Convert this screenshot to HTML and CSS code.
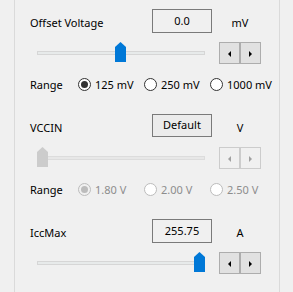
FILE: index.html
```html
<!DOCTYPE html>
<html lang="en">
<head>
  <meta charset="UTF-8" />
  <title>Voltage Settings</title>
  <link rel="stylesheet" href="styles.css">
</head>
<body>

<div class="panel">

  <!-- Offset Voltage -->
  <section class="setting">
    <div class="head">
      <span class="label">Offset Voltage</span>
      <span class="field">0.0</span>
      <span class="unit">mV</span>
    </div>
    <div class="slide-row">
      <div class="slider">
        <div class="track"></div>
        <div class="thumb" style="left: 78px"></div>
      </div>
      <div class="spin">
        <button class="arrow left"></button>
        <button class="arrow right"></button>
      </div>
    </div>
    <div class="range">
      <span class="range-label">Range</span>
      <label class="option"><span class="radio checked"></span>125 mV</label>
      <label class="option"><span class="radio"></span>250 mV</label>
      <label class="option"><span class="radio"></span>1000 mV</label>
    </div>
  </section>

  <!-- VCCIN -->
  <section class="setting disabled">
    <div class="head">
      <span class="label">VCCIN</span>
      <button class="field button">Default</button>
      <span class="unit">V</span>
    </div>
    <div class="slide-row">
      <div class="slider">
        <div class="track"></div>
        <div class="thumb" style="left: 0px"></div>
      </div>
      <div class="spin">
        <button class="arrow left"></button>
        <button class="arrow right"></button>
      </div>
    </div>
    <div class="range">
      <span class="range-label">Range</span>
      <label class="option"><span class="radio checked"></span>1.80 V</label>
      <label class="option"><span class="radio"></span>2.00 V</label>
      <label class="option"><span class="radio"></span>2.50 V</label>
    </div>
  </section>

  <!-- IccMax -->
  <section class="setting last">
    <div class="head">
      <span class="label">IccMax</span>
      <span class="field">255.75</span>
      <span class="unit">A</span>
    </div>
    <div class="slide-row">
      <div class="slider">
        <div class="track"></div>
        <div class="thumb" style="left: 157px"></div>
      </div>
      <div class="spin">
        <button class="arrow left"></button>
        <button class="arrow right"></button>
      </div>
    </div>
  </section>

</div>

</body>
</html>
```

FILE: styles.css
```css
/* Reset */
* {
  box-sizing: border-box;
  margin: 0;
  padding: 0;
}

body {
  font-family: "Noto Sans", "Liberation Sans", sans-serif;
  font-size: 11px;
  color: #000;
  background-color: #f0f0f0;
}

/* Group panel */
.panel {
  margin-left: 14px;
  width: 266px;
  height: 292px;
  padding-top: 9px;
  border-left: 1px solid #dadada;
  border-right: 1px solid #dadada;
}

.setting {
  height: 105px;
  padding-left: 15px;
}

.setting.last {
  height: auto;
}

/* Label / value / unit */
.head {
  display: flex;
  align-items: center;
  height: 24px;
}

.label {
  width: 122px;
  padding-top: 2px;
}

.field {
  width: 60px;
  height: 24px;
  border: 1px solid #7a7a7a;
  background: #f0f0f0;
  display: flex;
  justify-content: center;
  align-items: center;
  padding-bottom: 2px;
  font: inherit;
  color: #000;
}

.button {
  height: 23px;
  align-self: flex-start;
  background: #ececec;
}

.unit {
  width: 42px;
  margin-left: 7px;
  text-align: center;
  padding-top: 2px;
}

/* Slider + spin buttons */
.slide-row {
  display: flex;
  margin-top: 9px;
  height: 22px;
}

.slider {
  position: relative;
  width: 168px;
  margin-left: 7px;
}

.track {
  margin-top: 9px;
  height: 4px;
  background: #e7eaea;
  border: 1px solid #d6d6d6;
}

.thumb {
  position: absolute;
  top: 0;
  width: 11px;
  height: 20px;
  background: #0078d7;
  clip-path: polygon(50% 0, 100% 5px, 100% 100%, 0 100%, 0 5px);
}

.spin {
  display: flex;
  margin-left: 14px;
}

.arrow {
  position: relative;
  width: 21px;
  height: 22px;
  border: 1px solid #adadad;
  background: #e1e1e1;
}

.arrow::after {
  content: "";
  position: absolute;
  top: 8px;
  left: 8px;
  border-top: 3px solid transparent;
  border-bottom: 3px solid transparent;
}

.arrow.left::after {
  border-right: 3px solid #000;
}

.arrow.right::after {
  border-left: 3px solid #000;
}

/* Range radios */
.range {
  display: flex;
  align-items: center;
  margin-top: 12px;
  height: 16px;
}

.range-label {
  width: 48px;
}

.option {
  display: flex;
  align-items: center;
  gap: 4px;
  width: 66px;
}

.option:last-child {
  width: auto;
}

.radio {
  width: 13px;
  height: 13px;
  border-radius: 50%;
  border: 1px solid #333;
  background: #fff;
  position: relative;
}

.radio.checked::after {
  content: "";
  position: absolute;
  left: 2px;
  top: 2px;
  width: 7px;
  height: 7px;
  border-radius: 50%;
  background: #333;
}

/* Disabled group */
.disabled .thumb {
  background: #cccccc;
}

.disabled .track {
  background: #e7e7e7;
  border-color: #dcdcdc;
}

.disabled .arrow {
  border-color: #cccccc;
  background: #f0f0f0;
}

.disabled .arrow.left::after {
  border-right-color: #a0a0a0;
}

.disabled .arrow.right::after {
  border-left-color: #a0a0a0;
}

.disabled .option {
  color: #8d8d8d;
}

.disabled .radio {
  border-color: #bcbcbc;
}

.disabled .radio.checked {
  background: #f0f0f0;
}

.disabled .radio.checked::after {
  background: #bcbcbc;
}
```
